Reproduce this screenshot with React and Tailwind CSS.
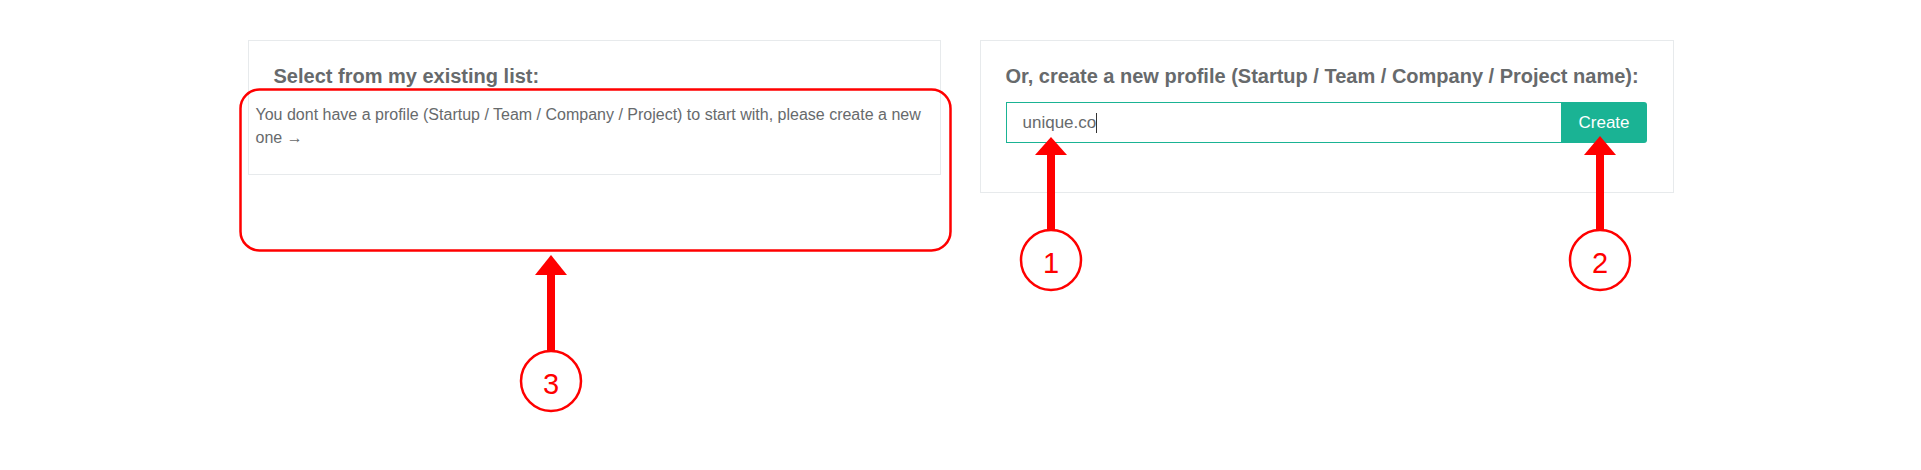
export default function App() {
  const font = { fontFamily: '"Liberation Sans", Arial, sans-serif' };

  return (
    <div className="relative w-full h-[470px] bg-white text-[#676a6c]" style={font}>
      <div className="flex justify-center items-start gap-[39px] pt-[40px]">
        {/* existing list */}
        <div className="w-[693px] border border-[#e7eaec] pt-[24px] pb-[25px]">
          <h3 className="pl-[25px] text-[20px] leading-[22px] font-bold">
            Select from my existing list:
          </h3>
          <p className="mt-[16px] px-[7px] text-[16px] leading-[23px]">
            You dont have a profile (Startup / Team / Company / Project) to start with, please create a new one →
          </p>
        </div>

        {/* create new */}
        <div className="w-[694px] border border-[#e7eaec] pt-[24px] pl-[25px] pr-[26px] pb-[49px]">
          <h3 className="text-[20px] leading-[22px] font-bold">
            Or, create a new profile (Startup / Team / Company / Project name):
          </h3>
          <div className="flex mt-[15px] h-[41px]">
            <div className="flex-1 flex items-center border border-[#1ab394] pl-[16px] text-[17px]">
              <span>unique.co</span>
              <span className="w-px h-[20px] bg-[#333]" />
            </div>
            <button className="w-[85px] bg-[#1ab394] text-white text-[17px] rounded-r-[3px]">
              Create
            </button>
          </div>
        </div>
      </div>

      {/* annotations */}
      <svg
        className="absolute inset-0 pointer-events-none"
        width="1921"
        height="470"
        viewBox="0 0 1921 470"
      >
        <rect x="240.5" y="89.5" width="710" height="161" rx="19" fill="none" stroke="#ff0000" strokeWidth="2.5" />

        <polygon points="1051,137 1035,155 1067,155" fill="#ff0000" />
        <rect x="1047" y="154" width="8" height="77" fill="#ff0000" />
        <circle cx="1051" cy="260" r="30" fill="#fff" stroke="#ff0000" strokeWidth="2.5" />
        <text x="1051" y="272.5" textAnchor="middle" fontSize="29" fill="#ff0000" style={font}>1</text>

        <polygon points="1600,136 1584,155 1616,155" fill="#ff0000" />
        <rect x="1596" y="154" width="8" height="77" fill="#ff0000" />
        <circle cx="1600" cy="260" r="30" fill="#fff" stroke="#ff0000" strokeWidth="2.5" />
        <text x="1600" y="272.5" textAnchor="middle" fontSize="29" fill="#ff0000" style={font}>2</text>

        <polygon points="551,255 535,275 567,275" fill="#ff0000" />
        <rect x="547" y="274" width="8" height="77" fill="#ff0000" />
        <circle cx="551" cy="381" r="30" fill="#fff" stroke="#ff0000" strokeWidth="2.5" />
        <text x="551" y="393.5" textAnchor="middle" fontSize="29" fill="#ff0000" style={font}>3</text>
      </svg>
    </div>
  );
}
